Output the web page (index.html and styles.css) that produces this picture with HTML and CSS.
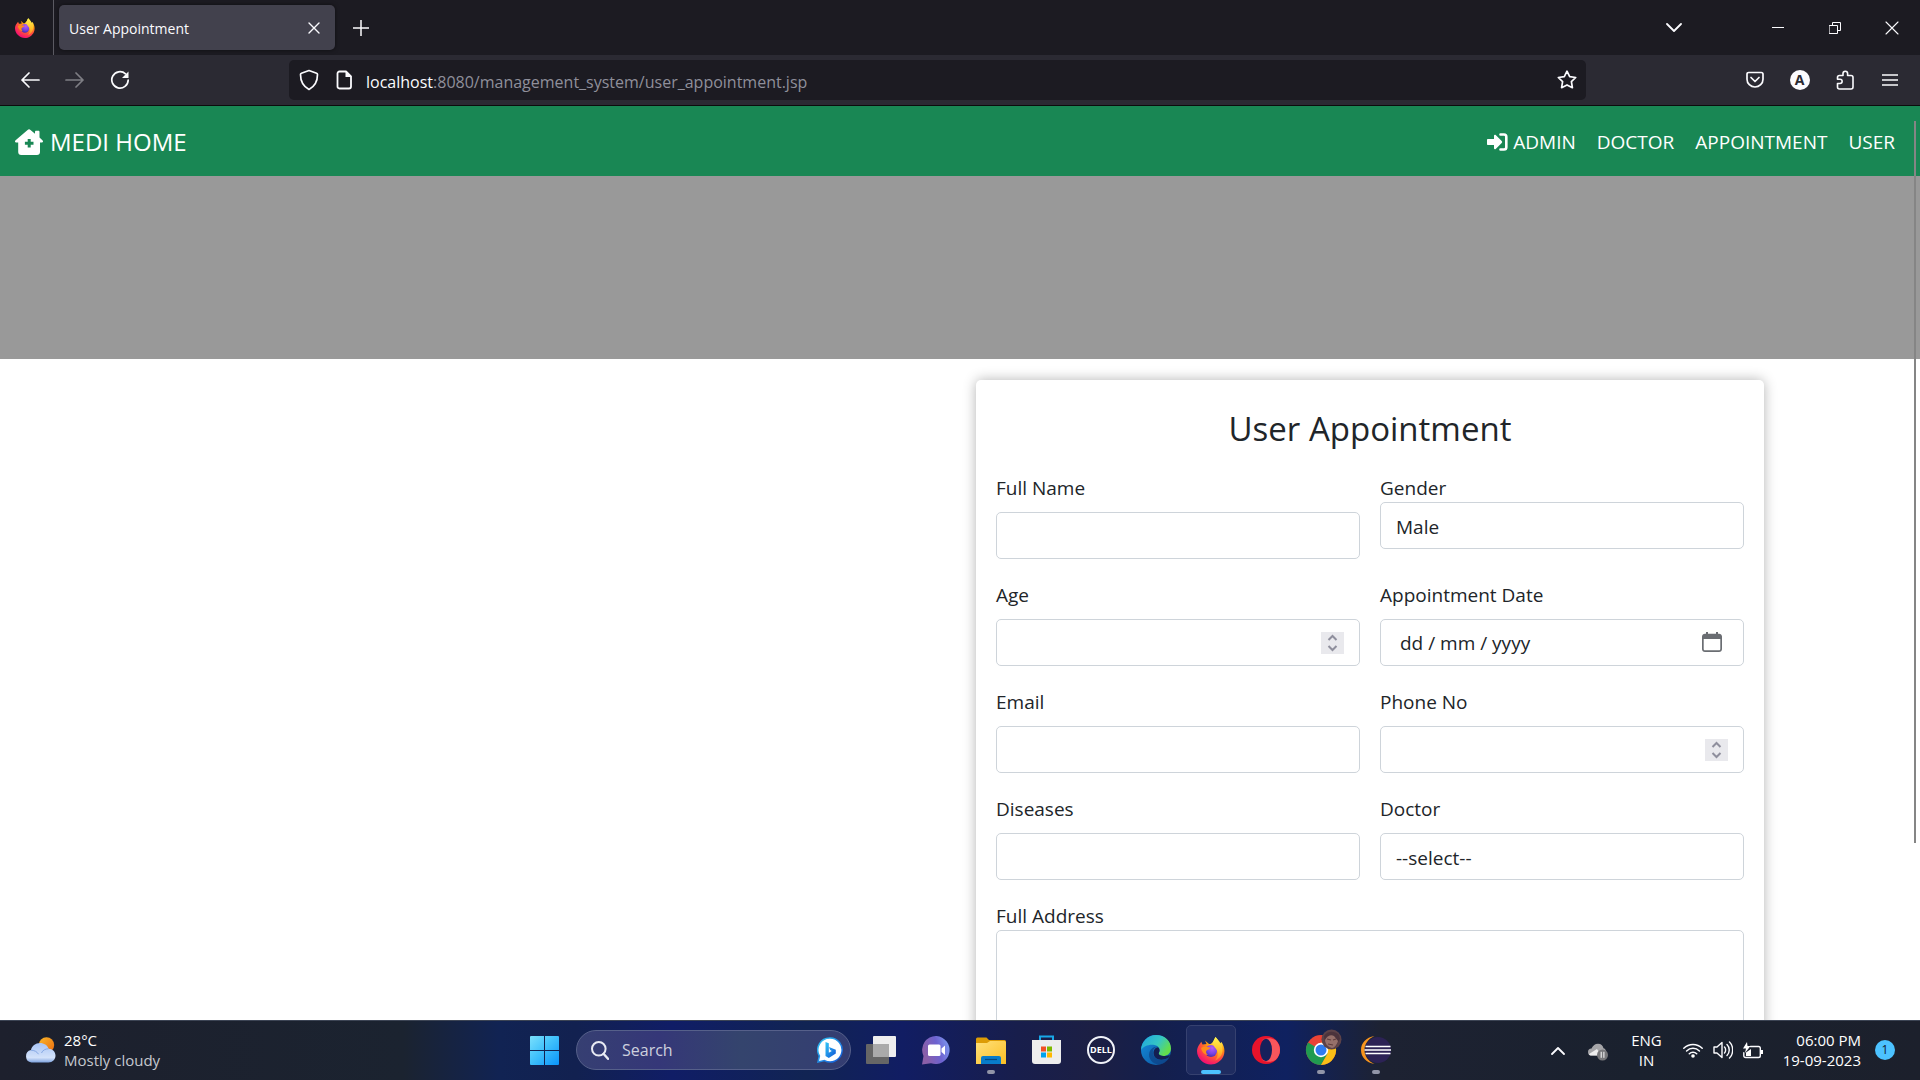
FILE: index.html
```html
<!DOCTYPE html>
<html lang="en">
<head>
<meta charset="utf-8">
<title>User Appointment</title>
<link rel="stylesheet" href="styles.css">
</head>
<body>
<svg class="defs" aria-hidden="true">
  <defs>
    <radialGradient id="fxBody" cx="75%" cy="12%" r="100%">
      <stop offset="0.1" stop-color="#fff44f"/><stop offset="0.4" stop-color="#ff980e"/><stop offset="0.65" stop-color="#ff4f3d"/><stop offset="0.9" stop-color="#f5156c"/>
    </radialGradient>
    <radialGradient id="fxGlobe" cx="60%" cy="25%" r="80%">
      <stop offset="0" stop-color="#b65cf5"/><stop offset="0.6" stop-color="#7542e5"/><stop offset="1" stop-color="#432ba0"/>
    </radialGradient>
    <linearGradient id="fxMane" x1="0" y1="0" x2="0" y2="1">
      <stop offset="0" stop-color="#fff44f"/><stop offset="0.6" stop-color="#ffc02b"/><stop offset="1" stop-color="#ff7a2c"/>
    </linearGradient>
    <linearGradient id="cloud" x1="0" y1="0" x2="0" y2="1"><stop offset="0" stop-color="#a9c5f5"/><stop offset="0.75" stop-color="#d3e2fa"/><stop offset="1" stop-color="#7fa3df"/></linearGradient>
    <linearGradient id="sun" x1="0" y1="0" x2="1" y2="1"><stop offset="0" stop-color="#fbb829"/><stop offset="1" stop-color="#ea6a10"/></linearGradient>
    <linearGradient id="win" x1="0" y1="0" x2="1" y2="1"><stop offset="0" stop-color="#7be0fc"/><stop offset="0.45" stop-color="#42c2fb"/><stop offset="1" stop-color="#0a94fb"/></linearGradient>
    <linearGradient id="bing" x1="0" y1="0" x2="1" y2="1"><stop offset="0" stop-color="#31c8f7"/><stop offset="1" stop-color="#1254d6"/></linearGradient>
    <linearGradient id="chat" x1="0" y1="0.3" x2="1" y2="0"><stop offset="0" stop-color="#8a5fa8"/><stop offset="0.5" stop-color="#6d62d0"/><stop offset="1" stop-color="#7fa3f5"/></linearGradient>
    <linearGradient id="folder" x1="0" y1="0" x2="1" y2="1"><stop offset="0" stop-color="#ffe07a"/><stop offset="1" stop-color="#fbbf24"/></linearGradient>
    <linearGradient id="edgeTop" x1="0" y1="0" x2="1" y2="0.5"><stop offset="0" stop-color="#1fa5e0"/><stop offset="0.6" stop-color="#35c6c4"/><stop offset="1" stop-color="#63dd4c"/></linearGradient>
    <linearGradient id="edgeLow" x1="0" y1="0" x2="1" y2="1"><stop offset="0" stop-color="#1490e0"/><stop offset="1" stop-color="#0c4f98"/></linearGradient>
    <symbol id="firefox" viewBox="0 0 28 28">
      <path d="M2 8.500 4.300 5.200 5.500 8 9.500 7.600 8 4 12 7.500C14 8 16 6 18.500 0.500 20.500 3 22 5 22.500 7.500L24.500 5.500C27.500 10 28.300 15 26.500 19.500 24 25 19 28 14 28 6.500 28 0 22 0 14.500 0 12 1 10 2 8.500Z" fill="url(#fxBody)"/>
      <circle cx="14" cy="14.500" r="6" fill="url(#fxGlobe)"/>
      <path d="M4 11.500C7 9.500 9 10.500 13.500 11 13 13 10.500 13 9.500 14 8.500 15.500 9.500 17.500 11 18.500 7.500 18.500 5 15.500 4 11.500Z" fill="#ff8b1a"/>
      <path d="M18.500 0.500C22 4 26 9 25.500 14.500 25 19.500 21.500 23 18 24 21 21 21.500 16.500 19.500 13 17.500 10.500 16 9 16.200 6 16.800 3.500 17.500 2 18.500 0.500Z" fill="url(#fxMane)"/>
    </symbol>
  </defs>
</svg>

<header class="browser">
  <div class="tabs">
    <span class="pinned"><svg width="20" height="20"><use href="#firefox"/></svg></span>
    <div class="tab"><span>User Appointment</span>
      <button class="plain" aria-label="Close tab"><svg width="12" height="12" viewBox="0 0 12 12" class="line"><path d="M1 1l10 10M11 1L1 11"/></svg></button>
    </div>
    <button class="plain new-tab" aria-label="New tab"><svg width="16" height="16" viewBox="0 0 16 16" class="line"><path d="M8 0v16M0 8h16" stroke-width="1.500"/></svg></button>
    <div class="window-buttons">
      <button class="plain tab-list" aria-label="List tabs"><svg width="16" height="10" viewBox="0 0 16 10" class="line"><path d="M1 1l7 7 7-7" stroke-width="1.800"/></svg></button>
      <button class="plain" aria-label="Minimize"><svg width="12" height="12" viewBox="0 0 12 12" class="line"><path d="M0 5.500h12" stroke-width="1"/></svg></button>
      <button class="plain" aria-label="Restore"><svg width="12" height="12" viewBox="0 0 12 12" class="line"><path d="M.5 3.500h8v8h-8zM3.500 3.500v-3h8v8h-3" stroke-width="1"/></svg></button>
      <button class="plain" aria-label="Close"><svg width="14" height="14" viewBox="0 0 14 14" class="line"><path d="M1 1l12 12M13 1L1 13" stroke-width="1.100"/></svg></button>
    </div>
  </div>
  <div class="toolbar">
    <button class="plain" aria-label="Back"><svg width="20" height="18" viewBox="0 0 20 18" class="line"><path d="M9 2L2 9l7 7M2 9h17" stroke-width="1.700"/></svg></button>
    <button class="plain dim" aria-label="Forward"><svg width="20" height="18" viewBox="0 0 20 18" class="line"><path d="M11 2l7 7-7 7M18 9H1" stroke-width="1.700"/></svg></button>
    <button class="plain" aria-label="Reload"><svg width="20" height="20" viewBox="0 0 20 20" class="line"><path d="M15.500 3.800A8.200 8.200 0 1 0 18.200 10" stroke-width="1.700"/><path d="M18.500 1.500v6.500h-6.500z" fill="#fbfbfe" stroke="none"/></svg></button>
    <div class="urlbar">
      <svg width="20" height="22" viewBox="0 0 20 22" class="line"><path d="M10 1.500l7.600 2.700c.6.200.9.600.9 1.200 0 6-2 11.500-8.500 15-6.500-3.500-8.500-9-8.500-15 0-.6.300-1 .9-1.200z" stroke-width="1.700"/></svg>
      <svg width="16" height="20" viewBox="0 0 16 20" class="line"><path d="M3.500 1.500h6.500l5 5v10c0 1.200-.8 2-2 2h-9.500c-1.200 0-2-.8-2-2v-13c0-1.200.8-2 2-2z" stroke-width="1.800"/><path d="M9.500 1v6H15.500z" fill="#fbfbfe" stroke="none"/></svg>
      <p class="url"><b>localhost</b>:8080/management_system/user_appointment.jsp</p>
      <svg width="20" height="20" viewBox="0 0 20 20" class="line"><path d="M10 1.200l2.700 5.400 6 .9-4.300 4.200 1 6L10 14.900 4.600 17.700l1-6L1.300 7.500l6-.9z" stroke-width="1.700"/></svg>
    </div>
    <button class="plain" aria-label="Save to Pocket"><svg width="18" height="18" viewBox="0 0 18 18" class="line"><path d="M2.700 1.500h12.600c1 0 1.700.7 1.700 1.700v5a8 7.800 0 0 1-16 0v-5c0-1 .7-1.700 1.700-1.700z" stroke-width="1.700"/><path d="M5 6.500l4 4 4-4" stroke-width="1.700"/></svg></button>
    <button class="plain" aria-label="Account"><span class="avatar">A</span></button>
    <button class="plain" aria-label="Extensions"><svg width="18" height="20" viewBox="0 0 18 20" class="line"><path d="M3.500 5.500h3.500V3.500a2.300 2.300 0 0 1 4.600 0v2h3.400c1.200 0 2 .8 2 2v9.500c0 1.200-.8 2-2 2h-11.500c-1.200 0-2-.8-2-2v-3.500h2.500a2 2 0 0 0 0-4.300h-2.500V7.500c0-1.200.8-2 2-2z" stroke-width="1.600"/></svg></button>
    <button class="plain" aria-label="Menu"><svg width="16" height="14" viewBox="0 0 16 14" class="line"><path d="M0 2h16M0 7h16M0 12h16" stroke-width="1.500"/></svg></button>
  </div>
</header>

<main class="page">
  <nav class="navbar">
    <a class="brand" href="#"><svg width="28" height="26" viewBox="0 0 28 26"><path d="M12.600.9a2.200 2.200 0 0 1 2.900 0L20 4.700V2.800c0-.7.500-1.100 1.100-1.100h2.300c.7 0 1.100.5 1.100 1.100v5.800l2.900 2.600c1.200 1.100.5 2.400-.9 2.400h-1.500v9.400c0 1.700-1.200 3-3 3H6.200c-1.800 0-3-1.300-3-3v-9.400H1.500c-1.400 0-2.100-1.300-.9-2.400z" fill="#fff"/><path d="M14.200 10v8.600M9.900 14.300h8.600" stroke="#198754" stroke-width="3"/></svg><span>MEDI HOME</span></a>
    <div class="links">
      <a href="#"><svg width="21" height="18" viewBox="0 0 21 18"><path d="M1 6h6V2.800c0-1 1-1.300 1.700-.7l6 6a1.200 1.200 0 0 1 0 1.800l-6 6c-.7.600-1.700.3-1.700-.7V12H1c-.6 0-1-.4-1-1V7c0-.6.400-1 1-1z" fill="#fff"/><path d="M13.500 1.500H17c1.400 0 2.300 1 2.300 2.300v10.400c0 1.400-1 2.300-2.300 2.300h-3.500" fill="none" stroke="#fff" stroke-width="2.600" stroke-linecap="round"/></svg><span>ADMIN</span></a>
      <a href="#">DOCTOR</a>
      <a href="#">APPOINTMENT</a>
      <a href="#">USER</a>
    </div>
  </nav>
  <div class="banner"></div>
  <div class="container">
    <form class="card">
      <h1>User Appointment</h1>
      <div class="fields">
        <div class="field"><label for="name">Full Name</label><input class="control" id="name" type="text"></div>
        <div class="field tight"><label for="gender">Gender</label><select class="control" id="gender"><option>Male</option><option>Female</option></select></div>
        <div class="field"><label for="age">Age</label>
          <div class="control with-icon"><input id="age" type="number"><svg class="spinner" width="23" height="22" viewBox="0 0 23 22"><path d="M7.500 8L11.500 4l4 4M7.500 14l4 4 4-4"/></svg></div></div>
        <div class="field"><label for="date">Appointment Date</label>
          <div class="control with-icon date"><input id="date" type="text" value="dd / mm / yyyy"><button class="plain" type="button" aria-label="Pick a date"><svg width="20" height="20" viewBox="0 0 20 20"><path d="M3 1.800h1V0h2v1.800h8V0h2v1.800h1c1.700 0 3 1.200 3 2.700V17c0 1.700-1.300 3-3 3H3c-1.700 0-3-1.300-3-3V4.500C0 3 1.300 1.800 3 1.800zM1.700 7v10c0 .8.500 1.300 1.300 1.300h14c.8 0 1.300-.5 1.300-1.300V7z" fill="#6a6d72" fill-rule="evenodd"/></svg></button></div></div>
        <div class="field"><label for="email">Email</label><input class="control" id="email" type="email"></div>
        <div class="field"><label for="phone">Phone No</label>
          <div class="control with-icon"><input id="phone" type="number"><svg class="spinner" width="23" height="22" viewBox="0 0 23 22"><path d="M7.500 8L11.500 4l4 4M7.500 14l4 4 4-4"/></svg></div></div>
        <div class="field"><label for="diseases">Diseases</label><input class="control" id="diseases" type="text"></div>
        <div class="field"><label for="doctor">Doctor</label><select class="control" id="doctor"><option>--select--</option></select></div>
        <div class="field tight wide"><label for="address">Full Address</label><textarea class="control" id="address"></textarea></div>
      </div>
    </form>
  </div>
  <div class="scrollbar"></div>
</main>

<footer class="taskbar">
  <div class="weather">
    <svg width="31" height="26" viewBox="0 0 31 26"><circle cx="21.500" cy="8" r="7.700" fill="url(#sun)"/><path d="M6.500 25.500a6.300 6.300 0 0 1-.5-12.400C6.800 9 10.500 6 15 6c4 0 7.300 2.200 8.600 5.700 4 .1 6.900 3.100 6.900 6.800 0 4-3 7-7 7z" fill="url(#cloud)"/><path d="M6 13.200c3 0 6 1.300 7.500 4M16.500 16c1-2.700 4-4.300 7-4.200" fill="none" stroke="#86a8e3" stroke-width="1"/></svg>
    <p><span>28°C</span><span class="muted">Mostly cloudy</span></p>
  </div>
  <div class="apps">
    <button class="app start" aria-label="Start"><svg width="29" height="29" viewBox="0 0 29 29"><path d="M0 1a1 1 0 0 1 1-1h13v14H0zM15 0h13a1 1 0 0 1 1 1v13H15zM0 15h14v14H1a1 1 0 0 1-1-1zM15 15h14v13a1 1 0 0 1-1 1H15z" fill="url(#win)"/></svg></button>
    <label class="search">
      <svg width="18" height="19" viewBox="0 0 18 19"><circle cx="7.800" cy="7.800" r="6.800" fill="none" stroke="#e8eaf3" stroke-width="2"/><path d="M12.500 12.800l4.500 5" stroke="#e8eaf3" stroke-width="2.400" stroke-linecap="round"/></svg>
      <input type="text" placeholder="Search" aria-label="Search">
      <svg width="26" height="26" viewBox="0 0 26 26"><path d="M13 1a12 12 0 1 1-5.500 22.600L1 25l1.400-6A12 12 0 0 1 13 1z" fill="#fff" stroke="url(#bing)" stroke-width="1.500"/><path d="M8.500 5l3.300 1.200v9.500l3-1.700-1.700-.9-1.100-3 6.800 2.600v3.800L11.800 21l-3.300-2z" fill="url(#bing)"/></svg>
    </label>
    <button class="app" aria-label="Task view"><svg width="30" height="28" viewBox="0 0 30 28"><rect y="8" width="23" height="20" rx="1" fill="#666"/><rect x="7" width="23" height="21" rx="1" fill="#eee"/><rect x="7" y="8" width="16" height="13" fill="#aaa"/></svg></button>
    <button class="app" aria-label="Chat"><svg width="30" height="29" viewBox="0 0 30 29"><path d="M15.500 0a14 14 0 1 1-5.500 27.200L1 28.500 2.500 20A14 14 0 0 1 15.500 0z" fill="url(#chat)"/><rect x="7" y="8.500" width="12.500" height="11.500" rx="1.500" fill="#fff"/><path d="M20.500 12.500l3.500-3v9.500l-3.500-3z" fill="#fff"/></svg></button>
    <button class="app open" aria-label="File Explorer"><svg width="30" height="27" viewBox="0 0 30 27"><path d="M0 2a1.500 1.500 0 0 1 1.500-1.500h9L13 3h15.500A1.500 1.500 0 0 1 30 4.500V12H0z" fill="#dd9c05"/><path d="M0 6h11l3-2h14.500A1.500 1.500 0 0 1 30 5.500V27H0z" fill="url(#folder)"/><path d="M5 27v-6a2 2 0 0 1 2-2h16a2 2 0 0 1 2 2v6z" fill="#087cca"/><path d="M9 22.500h12" stroke="#064a80" stroke-width="1.200"/></svg></button>
    <button class="app" aria-label="Microsoft Store"><svg width="29" height="30" viewBox="0 0 29 30"><path d="M8 6V1.500h13V6" fill="none" stroke="#18a8e8" stroke-width="2"/><path d="M0 5h29v21a3 3 0 0 1-3 3H3a3 3 0 0 1-3-3z" fill="#ededed"/><path d="M9 11.500h5v5H9z" fill="#f05025"/><path d="M15 11.500h5v5h-5z" fill="#7db900"/><path d="M9 17.500h5v5H9z" fill="#00a3ee"/><path d="M15 17.500h5v5h-5z" fill="#ffb800"/></svg></button>
    <button class="app" aria-label="Dell"><span class="dell">DELL</span></button>
    <button class="app" aria-label="Edge"><svg width="30" height="30" viewBox="0 0 30 30"><circle cx="15" cy="15" r="15" fill="url(#edgeLow)"/><path d="M15 0c9 0 15 6 15 13.500 0 5-4 7.500-8 7.500-3.500 0-5.300-1.700-4-3.500 1.500-2.500.5-6.500-4.500-7.500C8 9 2 11.500 0 15 .5 6.500 7 0 15 0z" fill="url(#edgeTop)"/><path d="M17 12c-5-.5-7 6-3 10.500 4 4 10 3 14.300-.5-1.500 3.800-5 6.500-9 7.500C11 29.500 6.500 23 8.500 17c1.300-4 5.500-6 8.500-5z" fill="#0e4387" opacity=".75"/><path d="M18 17.500c1.300-2 .5-4-1-5.300-4.500.5-6 6.300-2.700 10.300 3.700 3.500 9.700 2.500 14-.5l.5-2c-2 1-4 1.300-6.300 1-3.500-.2-5.500-1.700-4.500-3.500z" fill="#141f52"/></svg></button>
    <button class="app open active" aria-label="Firefox"><svg width="28" height="29" viewBox="0 0 28 29"><use href="#firefox"/></svg></button>
    <button class="app" aria-label="Opera"><svg width="28" height="28" viewBox="0 0 28 28"><circle cx="14" cy="14" r="14" fill="#e8132b"/><path d="M9.500 4.500C14 1 20 2 23.500 4c6 5.500 6 14.500 0 20-4 2.300-9.500 2.700-14-.5C13 25 19 22 19 14S13 3 9.500 4.500z" fill="#f8565c"/><ellipse cx="14" cy="14" rx="6" ry="11.200" fill="#16205b"/></svg></button>
    <button class="app open" aria-label="Chrome"><svg class="chrome" width="30" height="30" viewBox="0 5 30 30"><circle cx="15" cy="20" r="15" fill="#ea4335"/><path d="M2 12.500A15 15 0 0 0 15 35l7-12-7-3z" fill="#209b50"/><path d="M15 35a15 15 0 0 0 13-22.500H15l6.500 11.300z" fill="#fbbf16"/><circle cx="15" cy="20" r="7.200" fill="#fff"/><circle cx="15" cy="20" r="5.500" fill="#2f7bf0"/><circle cx="25.500" cy="9.500" r="10" fill="#5c4248"/><path d="M18 6c3-5 10-6 15-1l1 4-4 7-5-4-6 1z" fill="#4b333c"/><path d="M19 10c2-4 6-6 9-4l4 5c-1 4-4 7-6 7-4-1-7-4-7-8z" fill="#96706a"/><path d="M21 9l4 1M27 10l3-1M22 14l5 1" stroke="#5e3c3c" stroke-width="1.200"/></svg></button>
    <button class="app open" aria-label="Eclipse"><svg width="30" height="28" viewBox="0 0 30 28"><path d="M13.500 0C5 1.500 0 7 0 14s5 12.500 13.500 14C7 25 3.500 20 3.500 14S7 3 13.500 0z" fill="#f7941e"/><circle cx="17" cy="14" r="13" fill="#2c2255"/><path d="M4.500 10.500h25M3.500 14h26.500M4.500 17.500h25" stroke="#fff" stroke-width="1.400"/></svg></button>
  </div>
  <div class="tray">
    <button class="plain" aria-label="Show hidden icons"><svg width="14" height="9" viewBox="0 0 14 9" class="line"><path d="M1 8l6-6 6 6" stroke-width="1.800"/></svg></button>
    <svg class="onedrive" width="20" height="18" viewBox="0 0 20 18"><path d="M3.500 12.500a3.500 3.500 0 0 1 0-7C5 2.500 7 .8 10 .8c3 0 5 2 5.500 4.500 2 .5 2.500 2 2.500 4l-6 3.200z" fill="#a5a5a8"/><path d="M1 11l8-5 4 6.500H3.500C2 12.500 1.300 12 1 11z" fill="#eee"/><circle cx="14.500" cy="12" r="5.500" fill="#77777a"/><path d="M13.200 8.800v6M15.900 8.800v6" stroke="#fff"/></svg>
    <p class="lang"><span>ENG</span><span>IN</span></p>
    <div class="status">
      <svg width="20" height="16" viewBox="0 0 20 16" class="line"><path d="M.8 6.200a13 13 0 0 1 18.400 0M3.600 9a9 9 0 0 1 12.800 0M6.300 11.800a5.200 5.200 0 0 1 7.400 0" stroke-width="1.500"/><circle cx="10" cy="14" r="1.800" fill="#fff" stroke="none"/></svg>
      <svg width="20" height="18" viewBox="0 0 20 18" class="line"><path d="M1 6h3l5-4.500v15L4 12H1zM11.500 6c1.500 1.500 1.500 4.500 0 6M14 3.500c3 3 3 8 0 11M16.500 1c4.200 4 4.200 12 0 16" stroke-width="1.400"/></svg>
      <svg width="20" height="17" viewBox="0 0 20 17" class="line"><path d="M7.500 4.500h8c1 0 1.800.7 1.800 1.800v7.400c0 1-.7 1.800-1.800 1.800h-13c-1 0-1.700-.8-1.700-1.800v-3" stroke-width="1.400"/><path d="M18 8h2v4h-2zM3 10.500l5-3.500v7H3zM4 0L0 6.500h3L2 11l5.500-7H4.500z" fill="#fff" stroke="none"/></svg>
    </div>
    <p class="clock"><span>06:00 PM</span><span>19-09-2023</span></p>
    <span class="badge">1</span>
  </div>
</footer>
</body>
</html>
```

FILE: styles.css
```css
* { box-sizing: border-box; }

body {
  margin: 0;
  height: 100vh;
  display: flex;
  flex-direction: column;
  overflow: hidden;
  font: 19px/30px "Open Sans", "Noto Sans", sans-serif;
  color: #212529;
  background: #fff;
}

p, h1 { margin: 0; font-weight: 400; }
a { color: inherit; text-decoration: none; }
svg { display: block; flex: none; }
.defs { position: absolute; width: 0; height: 0; }
.line { fill: none; stroke: #fbfbfe; stroke-width: 1.4; stroke-linecap: round; stroke-linejoin: round; }

.plain {
  display: flex;
  align-items: center;
  justify-content: center;
  padding: 0;
  border: 0;
  background: none;
  font: inherit;
  color: inherit;
}

/* Browser chrome */
.browser { flex: none; color: #fbfbfe; background: #2b2a33; border-bottom: 1px solid #0c0c0d; }
.tabs { display: flex; align-items: center; height: 55px; background: #1c1b22; }
.pinned { display: flex; align-items: center; justify-content: flex-end; align-self: stretch; width: 54px; padding-right: 18px; border-right: 1px solid #5b5a62; }
.tab {
  display: flex;
  align-items: center;
  justify-content: space-between;
  width: 276px;
  height: 45px;
  margin-left: 5px;
  padding: 0 15px 0 10px;
  border-radius: 5px;
  background: #42414d;
  box-shadow: 0 0 4px #0008;
  font-size: 14px;
}
.tab span { padding-top: 2px; }
.new-tab { width: 52px; height: 45px; }
.window-buttons { display: flex; margin-left: auto; }
.window-buttons .plain { width: 57px; height: 50px; }
.window-buttons .tab-list { margin-right: 47px; }

.toolbar { display: flex; align-items: center; height: 50px; padding: 0 8px 0 7px; }
.toolbar .plain { width: 45px; height: 45px; }
.toolbar .dim { opacity: .4; }
.urlbar {
  display: flex;
  align-items: center;
  flex: 1;
  height: 40px;
  margin: 0 146px 0 147px;
  padding: 0 9px 0 10px;
  border-radius: 5px;
  background: #1c1b22;
}
.urlbar svg + svg { margin-left: 17px; }
.url { flex: 1; margin-left: 14px; padding-top: 3px; font-size: 16px; color: #8f8f9a; }
.url b { font-weight: 400; color: #fbfbfe; }
.avatar { width: 20px; height: 20px; border-radius: 50%; background: #fbfbfe; color: #2b2a33; font: 700 14px/20px "Open Sans", sans-serif; }

/* Web page */
.page { position: relative; flex: 1; min-height: 0; overflow: hidden; }
.navbar { display: flex; align-items: center; justify-content: space-between; height: 70px; padding: 2px 25px 0 15px; background: #198754; color: #fff; }
.brand { display: flex; align-items: center; gap: 7px; font-size: 24px; }
.links { display: flex; gap: 21px; }
.links a { display: flex; align-items: center; gap: 5px; }
.banner { height: 183px; background: #999; }
.container { display: grid; grid-template-columns: 1fr 1fr; gap: 32px; padding: 21px 156px; }
.card { grid-column: 2; padding: 25px 20px; border-radius: 5px; background: #fff; box-shadow: 0 0 13px rgba(0, 0, 0, .3); }
.card h1 { margin-bottom: 20px; font-size: 33px; line-height: 47px; text-align: center; }
.fields { display: grid; grid-template-columns: 1fr 1fr; gap: 20px; align-items: start; }
.field { display: flex; flex-direction: column; gap: 10px; }
.field label { height: 30px; padding-top: 1px; }
.tight { gap: 0; }
.wide { grid-column: 1 / -1; }
.control {
  width: 100%;
  height: 47px;
  padding: 8px 15px 6px;
  border: 1px solid #ced4da;
  border-radius: 5px;
  background: #fff;
  color: #212529;
  font: inherit;
  appearance: none;
}
textarea.control { height: 102px; display: block; }
.with-icon { display: flex; align-items: center; padding: 7px 15px; }
.with-icon input { flex: 1; min-width: 0; padding: 2px 0 0; border: 0; outline: 0; background: none; font: inherit; color: inherit; appearance: textfield; }
.date { padding: 6px 21px 8px 19px; }
.spinner { background: #e9e9ed; fill: none; stroke: #8f8f9d; stroke-width: 2; }
.scrollbar { position: absolute; top: 15px; right: 4px; width: 2px; height: 79%; background: #858585; }

/* Taskbar */
.taskbar {
  display: grid;
  grid-template-columns: 1fr auto 1fr;
  align-items: center;
  flex: none;
  height: 60px;
  box-shadow: inset 0 1px #3c4454;
  color: #fff;
  font-size: 15px;
  line-height: 20px;
  background: linear-gradient(90deg, #1d202d 0, #1b2330 21%, #112353 26%, #122150 30%, #101d66 35%, #112453 42%, #111d63 47%, #181e4c 53%, #1c1f44 57%, #141f4c 60%, #0f2160 67%, #1d2232 72%, #1a212e 85%, #1c202c 100%);
}
.taskbar p { display: flex; flex-direction: column; }
.weather { display: flex; align-items: center; gap: 8px; padding-left: 25px; }
.muted { color: #c5c8ce; }
.apps { display: flex; align-items: center; gap: 5px; }
.app {
  position: relative;
  display: flex;
  align-items: center;
  justify-content: center;
  width: 50px;
  height: 50px;
  padding: 0;
  border: 1px solid transparent;
  border-radius: 5px;
  background: none;
}
.start { margin-right: 2px; }
.open::after { content: ""; position: absolute; bottom: 0; left: 50%; width: 8px; height: 4px; margin-left: -4px; border-radius: 2px; background: #9195a8; }
.active { border-color: #36416f; background: #1f2c60; }
.active::after { width: 20px; margin-left: -10px; background: #4cc2ff; }
.chrome { overflow: visible; }
.search { display: flex; align-items: center; gap: 13px; width: 275px; height: 40px; padding: 0 7px 0 14px; border: 1px solid #56608a; border-radius: 20px; background: linear-gradient(90deg, #363f72, #353778 30%, #34446d 60%, #343d72); }
.search input { flex: 1; min-width: 0; padding: 0; border: 0; background: none; color: #fff; font: 16px/24px "Open Sans", sans-serif; }
.search input::placeholder { color: #cdd0de; }
.dell { width: 28px; height: 28px; border: 2px solid #f0f2f8; border-radius: 50%; color: #fff; font: 700 9px/24px "Open Sans", sans-serif; }
.tray { display: flex; align-items: center; justify-content: flex-end; padding-right: 25px; }
.onedrive { margin: 4px 23px 0; }
.lang { align-items: center; }
.status { display: flex; align-items: center; gap: 10px; margin: 0 20px 0 21px; }
.clock { align-items: flex-end; }
.badge { width: 20px; height: 20px; margin-left: 14px; border-radius: 50%; background: #4cc2ff; color: #10202e; font-size: 12px; text-align: center; }
```
